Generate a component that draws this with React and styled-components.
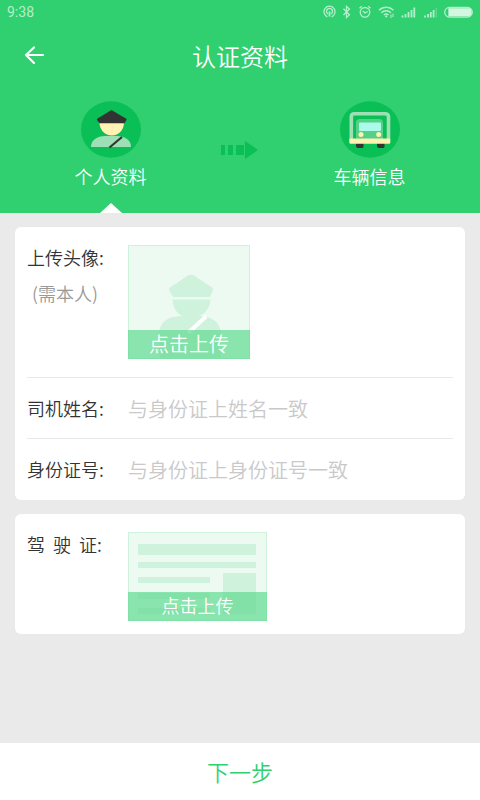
import React from "react";
import styled, { createGlobalStyle } from "styled-components";

const GlobalStyle = createGlobalStyle`
  *, *::before, *::after { box-sizing: border-box; }
  body {
    margin: 0;
    background: #eaeaea;
    color: #333;
    font-family: "Noto Sans CJK SC", "Noto Sans", sans-serif;
    font-size: 18px;
    line-height: 24px;
    font-weight: 350;
  }
  button, input { font: inherit; }
`;

const Page = styled.div`
  min-height: 100vh;
  display: flex;
  flex-direction: column;
`;

const Header = styled.header`
  background: #30cf70;
  color: #fff;
`;

const StatusBar = styled.div`
  height: 24px;
  padding: 0 5px 0 7px;
  display: flex;
  align-items: center;
  justify-content: space-between;
  font-family: Roboto, sans-serif;
  font-size: 14px;
  font-weight: 400;
  color: #b4efcb;
`;

const StatusIcons = styled.svg`
  display: block;
  width: 152px;
  height: 16px;
`;

const TitleBar = styled.div`
  height: 64px;
  padding: 0 22px;
  display: grid;
  grid-template-columns: 24px 1fr 24px;
  align-items: center;
`;

const BackButton = styled.button`
  width: 24px;
  height: 24px;
  padding: 0;
  border: 0;
  background: none;
  color: inherit;
  cursor: pointer;
`;

const Title = styled.h1`
  margin: 0;
  font-size: 24px;
  line-height: 32px;
  font-weight: 350;
  text-align: center;
`;

const Steps = styled.nav`
  display: grid;
  grid-template-columns: 1fr 38px 1fr;
  padding: 13px 0 0;
`;

const StepButton = styled.button`
  position: relative;
  height: 112px;
  padding: 0;
  border: 0;
  background: none;
  color: inherit;
  display: flex;
  flex-direction: column;
  align-items: center;
  gap: 6px;
  cursor: pointer;

  &::after {
    content: "";
    display: ${(p) => (p.$active ? "block" : "none")};
    position: absolute;
    bottom: 0;
    left: 50%;
    margin-left: -11px;
    border: solid transparent;
    border-width: 0 11px 10px;
    border-bottom-color: #fff;
  }
`;

const StepIcon = styled.svg`
  display: block;
  width: 60px;
  height: 57px;
`;

const StepArrow = styled.svg`
  display: block;
  width: 38px;
  height: 18px;
  margin-top: 40px;
`;

const Form = styled.main`
  flex: 1;
  padding: 14px 15px;
  display: flex;
  flex-direction: column;
  gap: 14px;
`;

const Card = styled.section`
  background: #fff;
  border-radius: 6px;
  padding: 0 12px 1px;
`;

const UploadRow = styled.div`
  display: grid;
  grid-template-columns: 101px 1fr;
  align-items: start;
  padding: 18px 0 ${(p) => (p.$compact ? 12 : 18)}px;
`;

const FieldRow = styled.div`
  display: grid;
  grid-template-columns: 101px 1fr;
  align-items: center;
  height: 61px;
  border-top: 1px solid #e8e8e8;
`;

const Label = styled.label`
  white-space: pre;
`;

const Note = styled.p`
  margin: 12px 0 0;
  padding-left: 5px;
  color: #999;
`;

const TextInput = styled.input`
  width: 100%;
  height: 32px;
  padding: 0;
  border: 0;
  outline: none;
  background: none;
  color: #333;
  font-size: 20px;

  &::placeholder { color: #c9c9c9; opacity: 1; }
`;

const UploadButton = styled.button`
  width: ${(p) => (p.$wide ? 139 : 122)}px;
  padding: 0;
  border: 0;
  background: none;
  color: #fff;
  display: grid;
  cursor: pointer;
`;

const UploadArt = styled.svg`
  grid-area: 1 / 1;
  display: block;
  width: 100%;
`;

const UploadCaption = styled.span`
  grid-area: 1 / 1;
  align-self: end;
  height: 29px;
  line-height: ${(p) => (p.$large ? 28 : 26)}px;
  font-size: ${(p) => (p.$large ? 20 : 18)}px;
  background: rgba(91, 217, 142, 0.68);
`;

const Footer = styled.footer`
  background: #fff;
`;

const NextButton = styled.button`
  display: block;
  width: 100%;
  height: 57px;
  padding: 0 0 2px;
  border: 0;
  background: none;
  color: #30cf70;
  font-size: 22px;
  cursor: pointer;
`;

function StatusSymbols() {
  return (
    <StatusIcons viewBox="0 0 152 16" fill="none" stroke="#b4efcb" strokeWidth="1.3" aria-hidden="true">
      <path d="M4.400 12.800A5.500 5.500 0 1 1 8.600 12.800M4.900 10A3 3 0 1 1 8.100 10" />
      <path d="M6.500 7.500v5" strokeWidth="1.800" />
      <path d="M20.500 4.800l6 6-3 2.700V2.500l3 2.500-6 6" />
      <circle cx="42" cy="8.300" r="4.800" />
      <path d="M39.800 7l2.200 2 2.700-1.500M36.500 4.300l2.300-2M47.500 4.300l-2.300-2" />
      <path d="M56 6.200a10.500 10.500 0 0 1 14.500 0M58.300 8.700a7 7 0 0 1 9.700 0M60.800 11a3.600 3.600 0 0 1 4.700 0" strokeWidth="1.500" />
      <path d="M63.200 11l1.300 1.500-1.300 1.300-1.300-1.300z" fill="#b4efcb" stroke="none" />
      <path d="M68 10.500v3.500M70 9.500v3.500" strokeWidth="1" />
      <path d="M79.500 11.500v2M82.500 10v3.500M85.500 8v5.500M88.500 6v7.500M91.300 3.500v10" strokeWidth="1.800" />
      <path d="M102 11.500v2M105 10v3.500M107.800 8v5.500M110.600 6v7.500" strokeWidth="1.800" />
      <path d="M113.300 4v9.500" strokeWidth="1.400" opacity=".35" />
      <rect x="121.700" y="3.500" width="27.600" height="9.500" rx="4.700" />
      <path d="M126 5h20q2 0 2 3.200t-2 3.200H126z" fill="#d3f6e0" stroke="#d3f6e0" />
    </StatusIcons>
  );
}

function DriverIcon() {
  return (
    <StepIcon viewBox="0 0 60 57" aria-hidden="true">
      <ellipse cx="30" cy="28.500" rx="30" ry="28.200" fill="#0abf55" />
      <path d="M10 46c0-7 6-11 14-11h12c8 0 14 4 14 11z" fill="#9edfb5" />
      <path d="M18.500 21h24.500c0 8-5 13.500-12.200 13.500S18.500 29 18.500 21z" fill="#fff2b3" />
      <path d="M28.500 46.500L41 36" stroke="#333" strokeWidth="2.200" />
      <path d="M30.500 9Q37 13 45 17.500q.8.500.5 1.500L43.500 22.300h-25L16 19q-.5-1 .5-1.500Q24 13 30.500 9z" fill="#333" />
    </StepIcon>
  );
}

function TruckIcon() {
  return (
    <StepIcon viewBox="0 0 60 57" aria-hidden="true">
      <ellipse cx="30" cy="28.500" rx="30" ry="28.200" fill="#0abf55" />
      <path d="M11.300 39V16q0-3.200 3.200-3.200H45q3.500 0 3.500 3.200v23" fill="none" stroke="#9edfb5" strokeWidth="3.600" />
      <path d="M16 38V22q0-4 4-4h19q4 0 4 4v16z" fill="#55d187" />
      <rect x="19" y="21.500" width="22" height="8.500" rx="1" fill="#acfae9" />
      <circle cx="21" cy="33.500" r="2.500" fill="#fff2b3" />
      <circle cx="38.700" cy="33.500" r="2.500" fill="#fff2b3" />
      <path d="M16 41h7.500v4.500q0 1.500-1.500 1.500h-4q-2 0-2-2zM37 41h7.500v4.500q0 1.500-1.500 1.500h-4q-2 0-2-2z" fill="#333" />
      <rect x="9.300" y="37.500" width="41" height="5.300" rx="1.200" fill="#fff2b3" />
    </StepIcon>
  );
}

function PortraitArt() {
  return (
    <UploadArt viewBox="0 0 122 114" aria-hidden="true">
      <rect x=".5" y=".5" width="121" height="113" fill="#edfaf2" stroke="#cdf3dc" />
      <path d="M60 30.500q3-1.500 6 0L84 42.500q1.500 1 1 2.500l-3 7H45l-4-7q-.5-1.500 1-2.500z" fill="#cff2dd" />
      <path d="M44.500 54.500h38c-.5 9-6 15-12 16.500 12 0 20 5 22 14v28H31.500V85c2-9 9-14 23.500-14-5.500-1.500-10-7.500-10.500-16.500z" fill="#cff2dd" />
      <path d="M60 88l18-16.500" stroke="#fff" strokeWidth="4" />
    </UploadArt>
  );
}

function LicenceArt() {
  return (
    <UploadArt viewBox="0 0 139 89" aria-hidden="true">
      <rect x=".5" y=".5" width="138" height="88" fill="#edfaf2" stroke="#cdf3dc" />
      <path d="M10 12h118v11H10zM10 30h118v6H10zM10 45h72v6H10zM10 61h72v6H10zM10 76h72v6H10zM95 41h33v41H95z" fill="#cff2dd" />
    </UploadArt>
  );
}

export default function App() {
  return (
    <>
      <GlobalStyle />
      <Page>
        <Header>
          <StatusBar>
            <span>9:38</span>
            <StatusSymbols />
          </StatusBar>
          <TitleBar>
            <BackButton type="button" aria-label="返回">
              <svg width="24" height="24" viewBox="0 0 24 24" fill="none" stroke="currentColor" strokeWidth="2.200" strokeLinecap="round" strokeLinejoin="round">
                <path d="M21 11H4M12 3.500L4 11l8 8" />
              </svg>
            </BackButton>
            <Title>认证资料</Title>
          </TitleBar>
          <Steps>
            <StepButton type="button" $active aria-current="step">
              <DriverIcon />
              个人资料
            </StepButton>
            <StepArrow viewBox="0 0 38 18" fill="#0abf55" aria-hidden="true">
              <path d="M0 4h4v10H0zM7 4h5v10H7zM15 4h8v10h-8zM24 0l13 9-13 9z" />
            </StepArrow>
            <StepButton type="button">
              <TruckIcon />
              车辆信息
            </StepButton>
          </Steps>
        </Header>
        <Form>
          <Card>
            <UploadRow>
              <div>
                <Label htmlFor="portrait">上传头像:</Label>
                <Note>(需本人)</Note>
              </div>
              <UploadButton id="portrait" type="button">
                <PortraitArt />
                <UploadCaption $large>点击上传</UploadCaption>
              </UploadButton>
            </UploadRow>
            <FieldRow>
              <Label htmlFor="driver-name">司机姓名:</Label>
              <TextInput id="driver-name" type="text" placeholder="与身份证上姓名一致" />
            </FieldRow>
            <FieldRow>
              <Label htmlFor="id-number">身份证号:</Label>
              <TextInput id="id-number" type="text" placeholder="与身份证上身份证号一致" />
            </FieldRow>
          </Card>
          <Card>
            <UploadRow $compact>
              <Label htmlFor="licence">{"驾  驶  证:"}</Label>
              <UploadButton id="licence" type="button" $wide>
                <LicenceArt />
                <UploadCaption>点击上传</UploadCaption>
              </UploadButton>
            </UploadRow>
          </Card>
        </Form>
        <Footer>
          <NextButton type="button">下一步</NextButton>
        </Footer>
      </Page>
    </>
  );
}
